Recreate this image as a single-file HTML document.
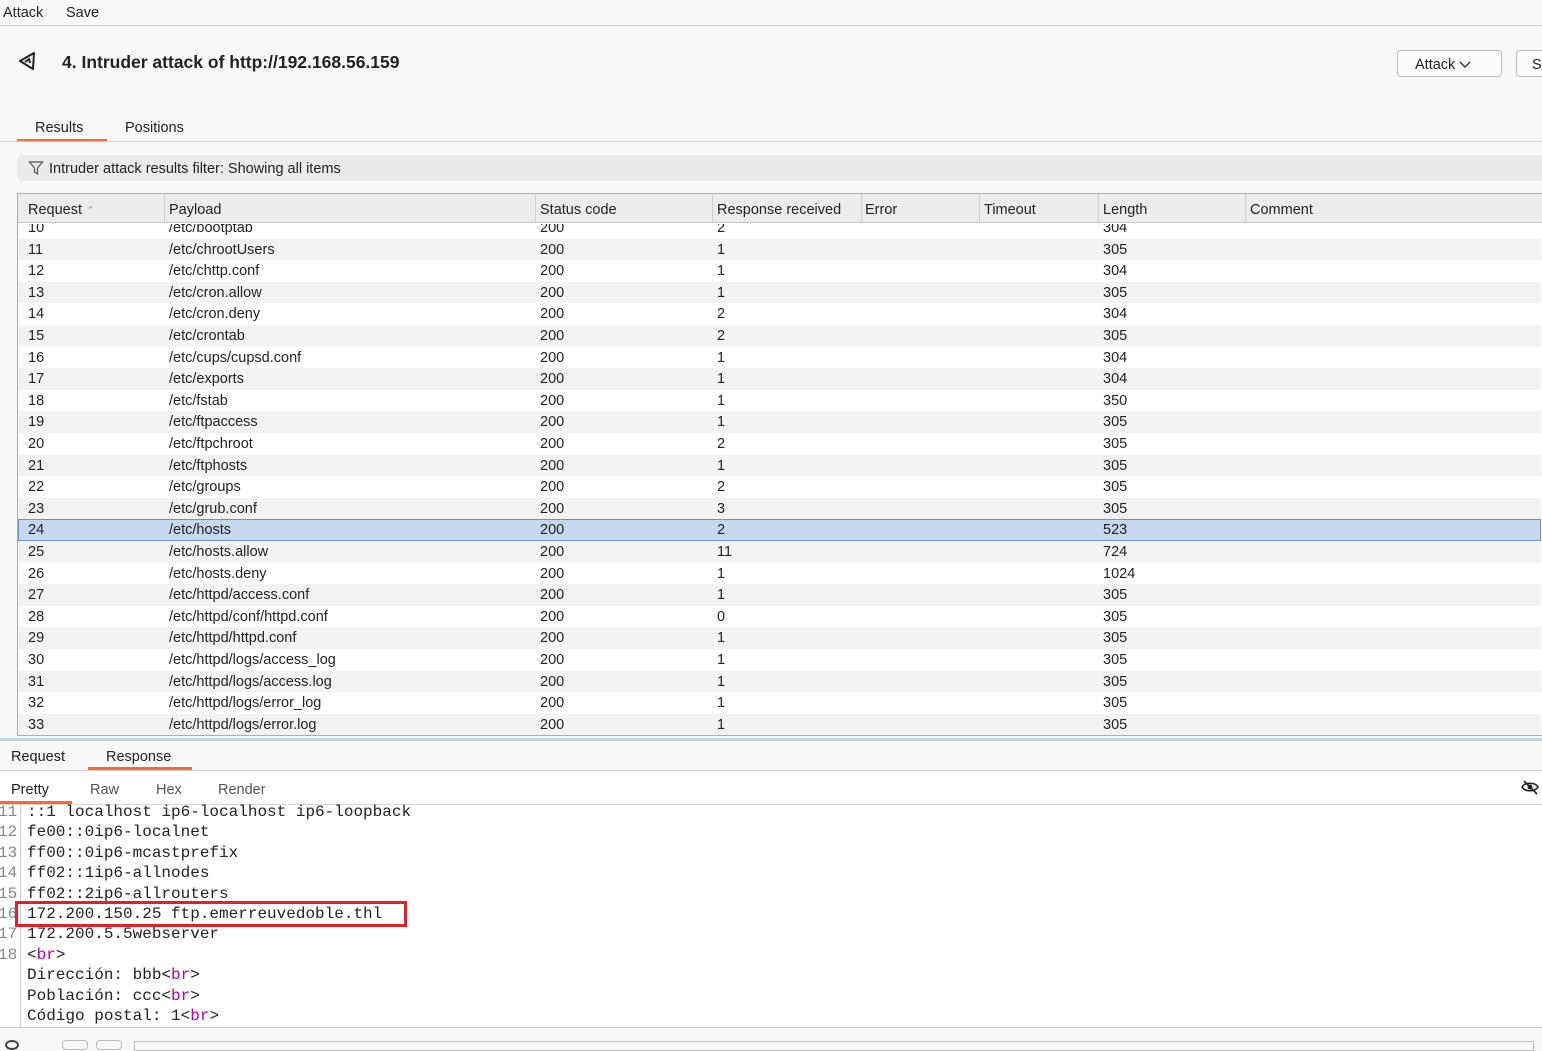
<!DOCTYPE html>
<html><head><meta charset="utf-8"><style>
*{margin:0;padding:0;box-sizing:border-box}
body{width:1542px;height:1045px;overflow:hidden;background:#f8f8f8;font-family:"Liberation Sans",sans-serif;font-size:14.5px;color:#222;position:relative}
.a{position:absolute;white-space:nowrap}
.row{position:absolute;left:19px;width:1523px;height:21.6px}
.row span{position:absolute;top:3px}
.mono{font-family:"Liberation Mono",monospace;font-size:16px;color:#222}
.tag{color:#b000b0}
</style></head><body>
<div class="a" style="left:3px;top:5px">Attack</div>
<div class="a" style="left:66px;top:5px">Save</div>
<div class="a" style="left:0;top:25px;width:1542px;height:1px;background:#d0d0d0"></div>
<svg class="a" style="left:18px;top:50px" width="22" height="22" viewBox="0 0 22 22"><path d="M2 11 L16 3 L15 19 Z M7 12 L11 9 L12 13" fill="none" stroke="#222" stroke-width="2" stroke-linejoin="round"/></svg>
<div class="a" style="left:62px;top:52px;font-weight:bold;font-size:17.5px">4. Intruder attack of http://192.168.56.159</div>
<div class="a" style="left:1397px;top:50px;width:105px;height:27px;border:1px solid #bbb;border-radius:4px;background:#fbfbfb;padding:6px 0 0 17px">Attack <svg width="12" height="8" viewBox="0 0 12 8"><path d="M1 1l5 5 5-5" fill="none" stroke="#333" stroke-width="1.4"/></svg></div>
<div class="a" style="left:1516px;top:50px;width:40px;height:27px;border:1px solid #bbb;border-radius:4px;background:#fbfbfb;padding:6px 0 0 15px">S</div>
<div class="a" style="left:35px;top:120px">Results</div>
<div class="a" style="left:125px;top:120px">Positions</div>
<div class="a" style="left:17px;top:139px;width:90px;height:3px;background:#ff6633"></div>
<div class="a" style="left:0;top:141px;width:1542px;height:1px;background:#d6d6d6"></div>
<div class="a" style="left:17px;top:155px;width:1525px;height:26px;background:#ebebeb;border-radius:5px 0 0 5px"></div>
<svg class="a" style="left:28px;top:160px" width="16" height="16" viewBox="0 0 16 16"><path d="M1.5 2h13l-5 6v6l-3-2V8z" fill="none" stroke="#555" stroke-width="1.2"/></svg>
<div class="a" style="left:49px;top:161px">Intruder attack results filter: Showing all items</div>
<div class="a" style="left:17px;top:193px;width:1525px;height:543px;background:#fff;border:1px solid #8fb3da;border-right:none"></div>
<div class="a" style="left:18px;top:194px;width:1524px;height:29px;background:#ececec;border-bottom:1px solid #c8c8c8"></div>
<div class="a" style="left:164px;top:194px;width:1px;height:29px;background:#d0d0d0"></div>
<div class="a" style="left:535px;top:194px;width:1px;height:29px;background:#d0d0d0"></div>
<div class="a" style="left:712px;top:194px;width:1px;height:29px;background:#d0d0d0"></div>
<div class="a" style="left:861px;top:194px;width:1px;height:29px;background:#d0d0d0"></div>
<div class="a" style="left:979px;top:194px;width:1px;height:29px;background:#d0d0d0"></div>
<div class="a" style="left:1098px;top:194px;width:1px;height:29px;background:#d0d0d0"></div>
<div class="a" style="left:1245px;top:194px;width:1px;height:29px;background:#d0d0d0"></div>
<div class="a" style="left:28px;top:202px">Request <span style="color:#999;font-size:11px">&#8963;</span></div>
<div class="a" style="left:169px;top:202px">Payload</div>
<div class="a" style="left:540px;top:202px">Status code</div>
<div class="a" style="left:717px;top:202px">Response received</div>
<div class="a" style="left:865px;top:202px">Error</div>
<div class="a" style="left:984px;top:202px">Timeout</div>
<div class="a" style="left:1103px;top:202px">Length</div>
<div class="a" style="left:1250px;top:202px">Comment</div>
<div class="a" style="left:18px;top:224px;width:1524px;height:511px;overflow:hidden">
<div style="position:relative;top:-7px">
<div id="rows"></div>
</div></div>
<script>
var d=[[10,"/etc/bootptab",2,304],[11,"/etc/chrootUsers",1,305],[12,"/etc/chttp.conf",1,304],[13,"/etc/cron.allow",1,305],[14,"/etc/cron.deny",2,304],[15,"/etc/crontab",2,305],[16,"/etc/cups/cupsd.conf",1,304],[17,"/etc/exports",1,304],[18,"/etc/fstab",1,350],[19,"/etc/ftpaccess",1,305],[20,"/etc/ftpchroot",2,305],[21,"/etc/ftphosts",1,305],[22,"/etc/groups",2,305],[23,"/etc/grub.conf",3,305],[24,"/etc/hosts",2,523],[25,"/etc/hosts.allow",11,724],[26,"/etc/hosts.deny",1,1024],[27,"/etc/httpd/access.conf",1,305],[28,"/etc/httpd/conf/httpd.conf",0,305],[29,"/etc/httpd/httpd.conf",1,305],[30,"/etc/httpd/logs/access_log",1,305],[31,"/etc/httpd/logs/access.log",1,305],[32,"/etc/httpd/logs/error_log",1,305],[33,"/etc/httpd/logs/error.log",1,305]];
var h="";d.forEach(function(r,i){var bg=r[0]==24?"background:#c6d8ee;outline:1px solid #6d93c4;outline-offset:-1px":(r[0]%2?"background:#f3f3f3":"background:#fff");
h+='<div class="row" style="left:0;top:'+(i*21.6)+'px;'+bg+'"><span style="left:10px">'+r[0]+'</span><span style="left:151px">'+r[1]+'</span><span style="left:522px">200</span><span style="left:699px">'+r[2]+'</span><span style="left:1085px">'+r[3]+'</span></div>';});
document.getElementById("rows").innerHTML=h;
</script>
<div class="a" style="left:0;top:738px;width:1542px;height:2px;background:#b9d2ee"></div>
<div class="a" style="left:0;top:740px;width:1542px;height:1px;background:#c8c8c8"></div>
<div class="a" style="left:11px;top:749px">Request</div>
<div class="a" style="left:106px;top:749px">Response</div>
<div class="a" style="left:88px;top:767px;width:104px;height:3px;background:#ff6633"></div>
<div class="a" style="left:0;top:770px;width:1542px;height:1px;background:#d0d0d0"></div>
<div class="a" style="left:0;top:771px;width:1542px;height:256px;background:#fff"></div>
<div class="a" style="left:11px;top:782px">Pretty</div>
<div class="a" style="left:90px;top:782px;color:#555">Raw</div>
<div class="a" style="left:156px;top:782px;color:#555">Hex</div>
<div class="a" style="left:218px;top:782px;color:#555">Render</div>
<div class="a" style="left:0;top:801px;width:72px;height:3px;background:#ff6633"></div>
<div class="a" style="left:0;top:804px;width:1542px;height:1px;background:#d6d6d6"></div>
<svg class="a" style="left:1521px;top:779px" width="18" height="16" viewBox="0 0 18 16"><path d="M1 8c3-5 13-5 16 0c-3 5-13 5-16 0z" fill="none" stroke="#222" stroke-width="1.6"/><circle cx="9" cy="8" r="2.5" fill="#222"/><path d="M3 2l13 13" stroke="#222" stroke-width="1.6"/></svg>
<div class="a" style="left:20px;top:805px;width:1px;height:222px;background:#ccc"></div>
<div class="a mono" style="left:-2px;top:802px;line-height:20.4px;color:#888">11<br>12<br>13<br>14<br>15<br>16<br>17<br>18</div>
<div class="a mono" style="left:27px;top:802px;line-height:20.4px">::1 localhost ip6-localhost ip6-loopback<br>fe00::0ip6-localnet<br>ff00::0ip6-mcastprefix<br>ff02::1ip6-allnodes<br>ff02::2ip6-allrouters<br>172.200.150.25 ftp.emerreuvedoble.thl<br>172.200.5.5webserver<br>&lt;<span class="tag">br</span>&gt;<br>Dirección: bbb&lt;<span class="tag">br</span>&gt;<br>Población: ccc&lt;<span class="tag">br</span>&gt;<br>Código postal: 1&lt;<span class="tag">br</span>&gt;</div>
<div class="a" style="left:15px;top:901px;width:392px;height:26px;border:3px solid #e0202a"></div>
<div class="a" style="left:0;top:1027px;width:1542px;height:1px;background:#c8c8c8"></div>
<div class="a" style="left:62px;top:1040px;width:26px;height:10px;border:1px solid #bbb;border-radius:4px"></div>
<div class="a" style="left:96px;top:1040px;width:26px;height:10px;border:1px solid #bbb;border-radius:4px"></div>
<div class="a" style="left:134px;top:1041px;width:1400px;height:10px;border:1px solid #bbb"></div>
<div class="a" style="left:5px;top:1040px;width:14px;height:10px;border:2px solid #444;border-radius:50%"></div>
</body></html>
